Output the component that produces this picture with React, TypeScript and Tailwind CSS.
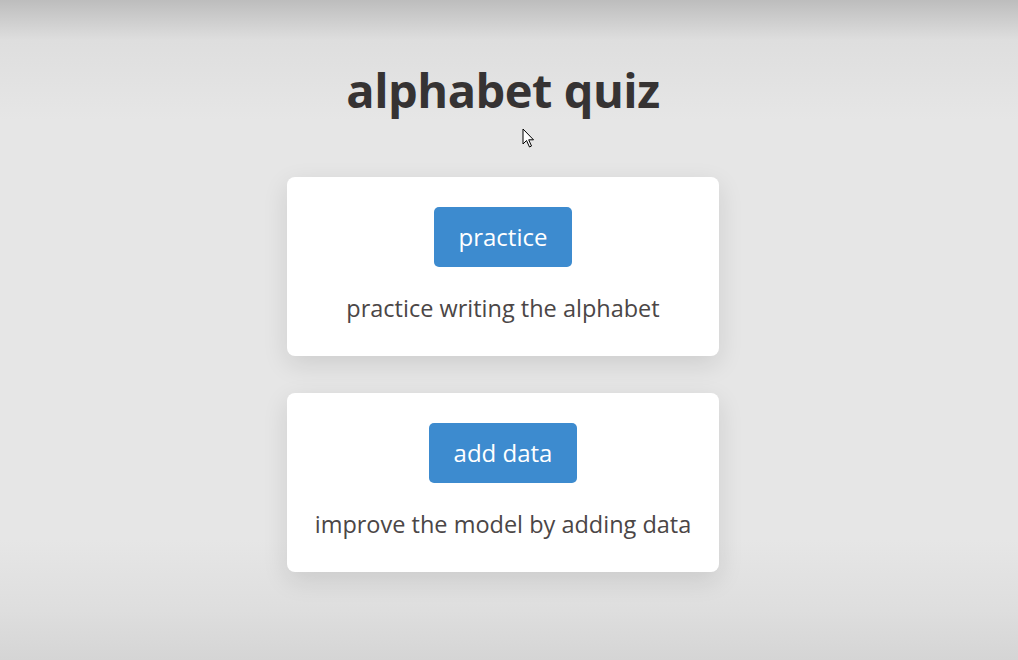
import React from "react";

const cards = [
	{ label: "practice", text: "practice writing the alphabet" },
	{ label: "add data", text: "improve the model by adding data" },
];

const Cursor = () => (
	<svg
		className="absolute left-[522px] top-[128px]"
		width="14"
		height="21"
		viewBox="0 0 14 21"
	>
		<path
			d="M1 1 L1 16 L4.5 12.5 L7.5 19 L9.5 18 L6.7 11.8 L11.5 11.8 Z"
			fill="#fff"
			stroke="#000"
			strokeWidth="1"
			strokeLinejoin="round"
		/>
	</svg>
);

export default function App() {
	return (
		<div className="relative min-h-screen w-full bg-[linear-gradient(to_bottom,#bdbdbd_0px,#dedede_40px,#e6e6e6_120px,#e6e6e6_540px,#dedede_610px,#d5d5d5_660px)] font-['Open_Sans',sans-serif]">
			<div className="flex flex-col items-center pt-[61px] pr-[12px]">
				<h1 className="text-[47px] leading-[58px] font-bold text-[#363333] tracking-[-0.5px]">
					alphabet quiz
				</h1>
				<div className="mt-[58px] flex flex-col gap-[37px]">
					{cards.map((card) => (
						<div
							key={card.label}
							className="flex h-[179px] w-[432px] flex-col items-center rounded-lg bg-white pt-[30px] shadow-[0_8px_26px_rgba(0,0,0,0.11)]"
						>
							<button className="flex h-[60px] items-center rounded-[5px] bg-[#3d8bcf] px-[25px] text-[24px] text-white">
								{card.label}
							</button>
							<p className="mt-[24px] text-[23.5px] text-[#4b4646]">
								{card.text}
							</p>
						</div>
					))}
				</div>
			</div>
			<Cursor />
		</div>
	);
}
